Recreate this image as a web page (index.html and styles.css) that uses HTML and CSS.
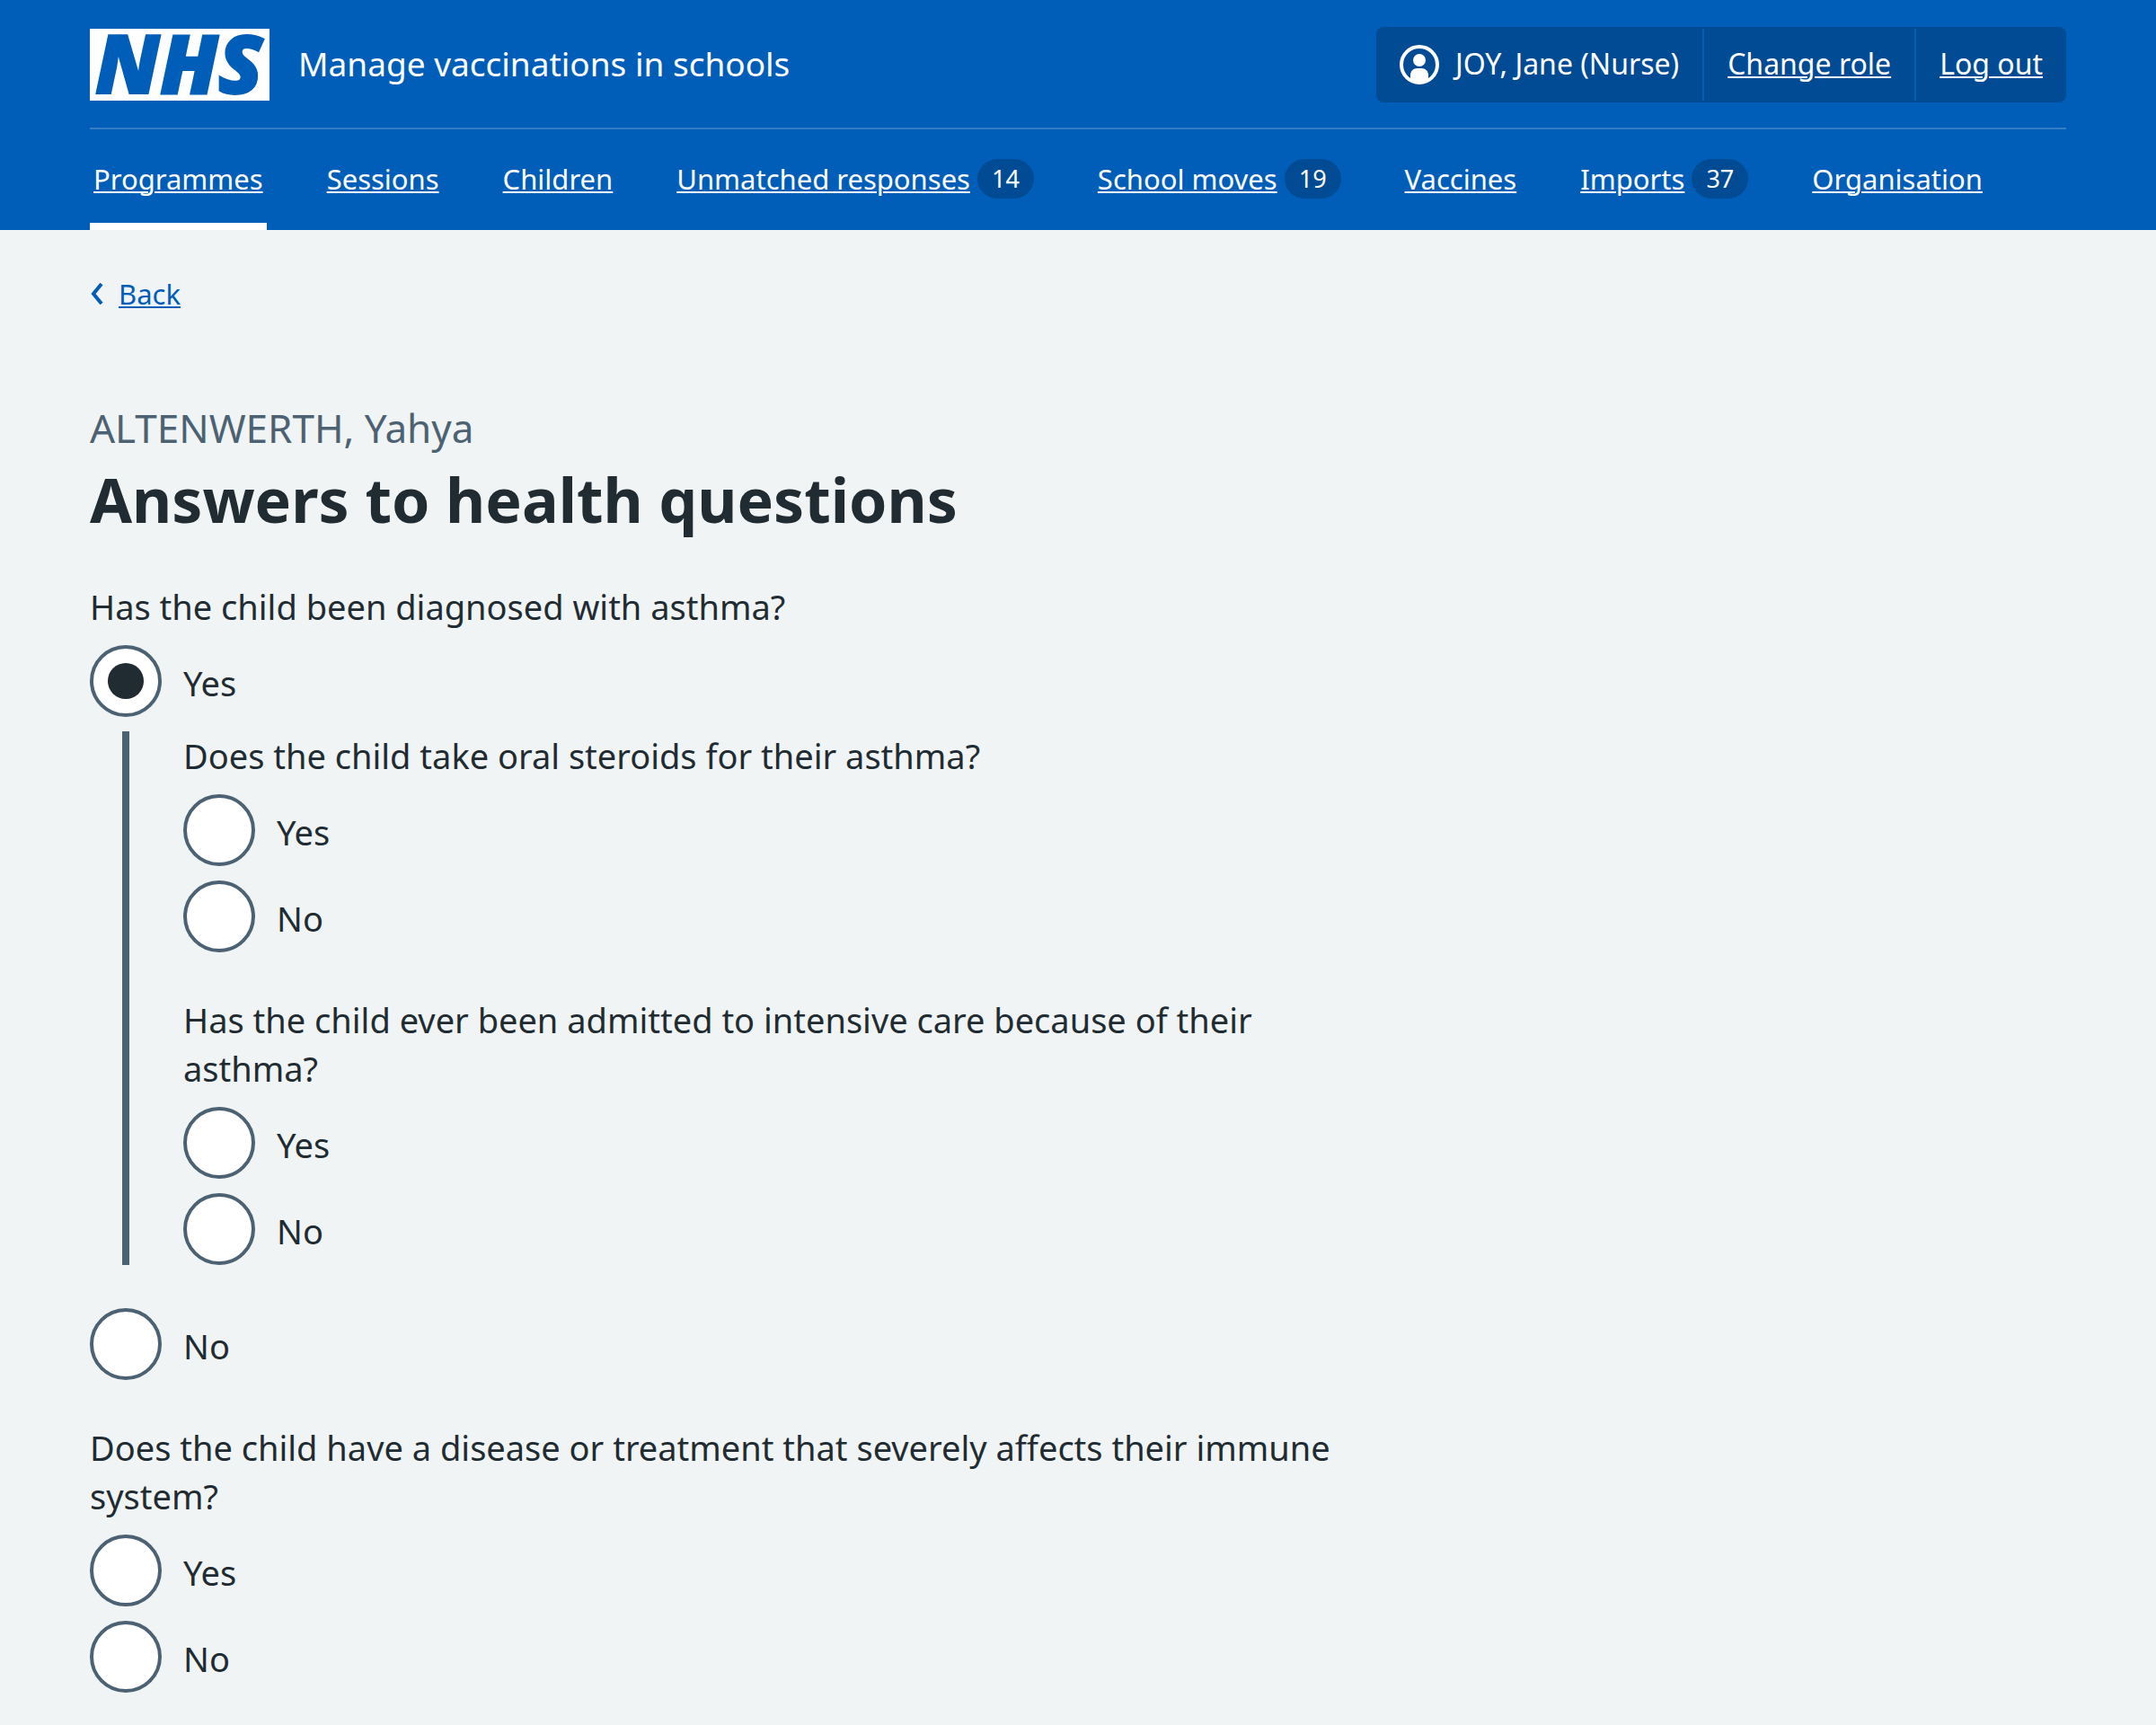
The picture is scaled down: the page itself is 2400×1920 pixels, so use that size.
FILE: index.html
```html
<!DOCTYPE html>
<html lang="en">
<head>
<meta charset="utf-8">
<meta name="viewport" content="width=device-width, initial-scale=1">
<title>Answers to health questions - Manage vaccinations in schools</title>
<link rel="stylesheet" href="styles.css">
</head>
<body>
<header class="header">
  <div class="header__top">
    <a class="header__service" href="#">
      <svg class="logo" viewBox="0 0 200 80" role="img" aria-label="NHS">
        <rect width="200" height="80" fill="#fff"/>
        <text class="logo__text" x="6" y="72">NHS</text>
      </svg>
      <span class="header__name">Manage vaccinations in schools</span>
    </a>
    <ul class="account">
      <li class="account__item">
        <svg class="account__icon" viewBox="0 0 44 44" aria-hidden="true">
          <circle cx="22" cy="22" r="20" fill="none" stroke="#fff" stroke-width="4"/>
          <circle cx="22" cy="17" r="7" fill="#fff"/>
          <path d="M12 40v-6c0-5 3-8 8-8h4c5 0 8 3 8 8v6c-6 4-14 4-20 0z" fill="#fff"/>
        </svg>
        <span class="account__text">JOY, Jane (Nurse)</span>
      </li>
      <li class="account__item"><a class="link account__text" href="#">Change role</a></li>
      <li class="account__item"><a class="link account__text" href="#">Log out</a></li>
    </ul>
  </div>
  <nav class="nav" aria-label="Menu">
    <ul class="nav__list">
      <li class="nav__item nav__item--current"><a class="link" href="#" aria-current="true">Programmes</a></li>
      <li class="nav__item"><a class="link" href="#">Sessions</a></li>
      <li class="nav__item"><a class="link" href="#">Children</a></li>
      <li class="nav__item"><a class="link" href="#">Unmatched responses</a><span class="badge">14</span></li>
      <li class="nav__item"><a class="link" href="#">School moves</a><span class="badge">19</span></li>
      <li class="nav__item"><a class="link" href="#">Vaccines</a></li>
      <li class="nav__item"><a class="link" href="#">Imports</a><span class="badge">37</span></li>
      <li class="nav__item"><a class="link" href="#">Organisation</a></li>
    </ul>
  </nav>
</header>

<main class="main">
  <div class="back">
    <svg class="back__icon" viewBox="0 0 16 24" aria-hidden="true">
      <path d="M13 1L4 12l9 11" fill="none" stroke="#005eb8" stroke-width="4"/>
    </svg>
    <a class="link" href="#">Back</a>
  </div>

  <h1 class="heading">
    <span class="heading__caption">ALTENWERTH, Yahya</span>
    <span class="heading__title">Answers to health questions</span>
  </h1>

  <form class="form">
    <fieldset class="question">
      <legend class="question__legend">Has the child been diagnosed with asthma?</legend>
      <div class="radios">
        <div class="radio">
          <input class="radio__input" type="radio" name="asthma" id="asthma-yes" checked>
          <label class="radio__label" for="asthma-yes">Yes</label>
        </div>
        <div class="conditional">
          <fieldset class="question">
            <legend class="question__legend">Does the child take oral steroids for their asthma?</legend>
            <div class="radios">
              <div class="radio">
                <input class="radio__input" type="radio" name="steroids" id="steroids-yes">
                <label class="radio__label" for="steroids-yes">Yes</label>
              </div>
              <div class="radio">
                <input class="radio__input" type="radio" name="steroids" id="steroids-no">
                <label class="radio__label" for="steroids-no">No</label>
              </div>
            </div>
          </fieldset>
          <fieldset class="question">
            <legend class="question__legend">Has the child ever been admitted to intensive care because of their asthma?</legend>
            <div class="radios">
              <div class="radio">
                <input class="radio__input" type="radio" name="intensive" id="intensive-yes">
                <label class="radio__label" for="intensive-yes">Yes</label>
              </div>
              <div class="radio">
                <input class="radio__input" type="radio" name="intensive" id="intensive-no">
                <label class="radio__label" for="intensive-no">No</label>
              </div>
            </div>
          </fieldset>
        </div>
        <div class="radio">
          <input class="radio__input" type="radio" name="asthma" id="asthma-no">
          <label class="radio__label" for="asthma-no">No</label>
        </div>
      </div>
    </fieldset>
    <fieldset class="question">
      <legend class="question__legend">Does the child have a disease or treatment that severely affects their immune system?</legend>
      <div class="radios">
        <div class="radio">
          <input class="radio__input" type="radio" name="immune" id="immune-yes">
          <label class="radio__label" for="immune-yes">Yes</label>
        </div>
        <div class="radio">
          <input class="radio__input" type="radio" name="immune" id="immune-no">
          <label class="radio__label" for="immune-no">No</label>
        </div>
      </div>
    </fieldset>
  </form>
</main>
</body>
</html>
```
FILE: styles.css
```css
* {
  box-sizing: border-box;
}

body {
  margin: 0;
  background: #f0f4f5;
  color: #212b32;
  font-family: "Noto Sans", "Open Sans", sans-serif;
  font-size: 38px;
  line-height: 54px;
}

ul {
  margin: 0;
  padding: 0;
  list-style: none;
}

.link {
  color: inherit;
  text-decoration: underline;
  text-decoration-thickness: 2px;
  text-underline-offset: 2px;
}

/* Header */
.header {
  padding: 0 100px;
  background: #005eb8;
  color: #fff;
}

.header__top {
  display: flex;
  align-items: center;
  justify-content: space-between;
  padding: 30px 0 28px;
  border-bottom: 2px solid #337ec6;
}

.header__service {
  display: flex;
  align-items: center;
  gap: 32px;
  color: inherit;
  text-decoration: none;
}

.header__name {
  padding-bottom: 2px;
  font-size: 37px;
}

.logo {
  width: 200px;
  height: 80px;
  overflow: visible;
}

.logo__text {
  fill: #005eb8;
  stroke: #005eb8;
  stroke-width: 2px;
  font-family: "Open Sans", "Noto Sans", sans-serif;
  font-size: 91px;
  font-style: italic;
  font-weight: 800;
}

.account {
  display: flex;
  padding: 2px 0;
  border-radius: 8px;
  background: #004b93;
  font-size: 32px;
}

.account__item {
  display: flex;
  align-items: center;
  gap: 18px;
  height: 80px;
  padding: 0 26px;
}

.account__item + .account__item {
  border-left: 2px solid #005eb8;
}

.account__icon {
  width: 44px;
  height: 44px;
}

.account__text {
  padding-bottom: 2px;
}

.nav {
  font-size: 31px;
}

.nav__list {
  display: flex;
  gap: 63px;
}

.nav__item {
  display: flex;
  align-items: center;
  gap: 8px;
  height: 112px;
  padding: 0 4px;
  border-top: 6px solid transparent;
  border-bottom: 8px solid transparent;
}

.nav__item--current {
  border-bottom-color: #fff;
}

.badge {
  padding: 0 16px;
  border-radius: 22px;
  background: #004b93;
  font-size: 27px;
  line-height: 44px;
}

/* Page */
.main {
  padding: 44px 100px 32px;
}

.back {
  display: flex;
  align-items: center;
  gap: 16px;
  color: #005eb8;
  font-size: 31px;
}

.back__icon {
  width: 16px;
  height: 24px;
}

.heading {
  display: flex;
  flex-direction: column;
  margin: 88px 0 46px;
}

.heading__caption {
  color: #4c6272;
  font-size: 44px;
  font-weight: 400;
  line-height: 68px;
}

.heading__title {
  font-size: 68px;
  font-weight: 700;
  line-height: 92px;
}

.form {
  display: grid;
  gap: 48px;
  width: 64%;
}

/* Questions */
.question {
  min-width: 0;
  margin: 0;
  padding: 0;
  border: 0;
}

.question__legend {
  margin-bottom: 16px;
  padding: 0;
}

.radios {
  display: grid;
  gap: 16px;
}

.radio {
  display: flex;
}

.radio__input {
  display: grid;
  flex: none;
  place-content: center;
  width: 80px;
  height: 80px;
  margin: 0;
  border: 4px solid #4c6272;
  border-radius: 50%;
  background: #fff;
  appearance: none;
}

.radio__input:checked::before {
  width: 40px;
  height: 40px;
  border-radius: 50%;
  background: #212b32;
  content: "";
}

.radio__label {
  padding: 15px 24px 11px;
}

.conditional {
  display: grid;
  gap: 48px;
  margin: 0 0 32px 36px;
  padding-left: 60px;
  border-left: 8px solid #4c6272;
}
```
